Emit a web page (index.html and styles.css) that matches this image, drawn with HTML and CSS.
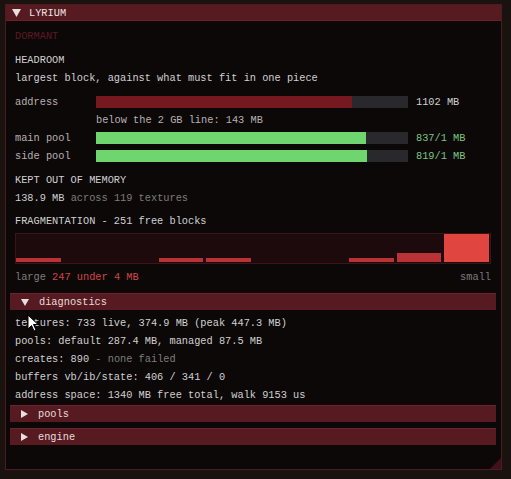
FILE: index.html
```html
<!DOCTYPE html>
<html lang="en">
  <head>
    <meta charset="UTF-8" />
    <title>Lyrium</title>
    <link rel="stylesheet" href="styles.css">
  </head>
  <body>
    <div class="window">
      <div class="title-bar">
        <svg class="tri" width="9" height="8" viewBox="0 0 9 8"><path d="M0 0H9L4.5 8Z" fill="#e8e0e0"/></svg>
        <span>LYRIUM</span>
      </div>

      <div class="content">
        <div class="row state">DORMANT</div>

        <div class="row section">HEADROOM</div>
        <div class="row">largest block, against what must fit in one piece</div>

        <div class="meters">
          <div class="meter">
            <span class="label">address</span>
            <div class="bar"><div class="fill red" style="width: 82%"></div></div>
            <span class="value">1102 MB</span>
          </div>
          <div class="meter">
            <span></span>
            <span class="label note">below the 2 GB line: 143 MB</span>
          </div>
          <div class="meter">
            <span class="label">main pool</span>
            <div class="bar"><div class="fill green" style="width: 86.5%"></div></div>
            <span class="value green-text">837/1 MB</span>
          </div>
          <div class="meter">
            <span class="label">side pool</span>
            <div class="bar"><div class="fill green" style="width: 87%"></div></div>
            <span class="value green-text">819/1 MB</span>
          </div>
        </div>

        <div class="row section">KEPT OUT OF MEMORY</div>
        <div class="row">138.9 MB <span class="dim">across 119 textures</span></div>

        <div class="row section frag-title">FRAGMENTATION - 251 free blocks</div>
        <div class="frag">
          <div class="bin" style="height: 4px"></div>
          <div class="bin empty"></div>
          <div class="bin empty"></div>
          <div class="bin" style="height: 4px"></div>
          <div class="bin" style="height: 4px"></div>
          <div class="bin empty"></div>
          <div class="bin empty"></div>
          <div class="bin" style="height: 4px"></div>
          <div class="bin" style="height: 9px"></div>
          <div class="bin hot" style="height: 28px"></div>
        </div>
        <div class="row frag-legend">
          <span><span class="dim">large</span> <span class="red-text">247 under 4 MB</span></span>
          <span class="dim">small</span>
        </div>

        <div class="header first">
          <svg class="tri" width="8" height="7" viewBox="0 0 8 7"><path d="M0 0H8L4 7Z" fill="#e8e0e0"/></svg>
          <span>diagnostics</span>
        </div>
        <div class="diag">
          <div class="row">textures: 733 live, 374.9 MB (peak 447.3 MB)</div>
          <div class="row">pools: default 287.4 MB, managed 87.5 MB</div>
          <div class="row">creates: 890 <span class="dim">- none failed</span></div>
          <div class="row">buffers vb/ib/state: 406 / 341 / 0</div>
          <div class="row">address space: 1340 MB free total, walk 9153 us</div>
        </div>

        <div class="header">
          <svg class="tri" width="7" height="8" viewBox="0 0 7 8"><path d="M0 0L7 4L0 8Z" fill="#e8e0e0"/></svg>
          <span>pools</span>
        </div>
        <div class="header next">
          <svg class="tri" width="7" height="8" viewBox="0 0 7 8"><path d="M0 0L7 4L0 8Z" fill="#e8e0e0"/></svg>
          <span>engine</span>
        </div>
      </div>

      <div class="grip"></div>
      <svg class="cursor" width="12" height="19" viewBox="0 0 12 19">
        <path d="M1 1V15L4.5 11.5L7 17L9 16L6.5 10.5H11Z" fill="#ffffff" stroke="#000000" stroke-width="1"/>
      </svg>
    </div>
  </body>
</html>
```

FILE: styles.css
```css
/* base */
* {
  margin: 0;
  padding: 0;
  box-sizing: border-box;
}

body {
  background: #19120f;
  font-family: "Liberation Mono", "DejaVu Sans Mono", monospace;
  font-size: 10.3px;
  color: #d0d0d0;
  height: 479px;
  overflow: hidden;
}

/* window frame */
.window {
  position: relative;
  margin: 4px 0 0 5px;
  width: 497px;
  height: 466px;
  background: #0c0808;
  border: 1px solid #4a1c20;
}

.title-bar {
  height: 16px;
  background: #561a20;
  border-bottom: 1px solid #6a2028;
  display: flex;
  align-items: center;
  gap: 8px;
  padding-left: 6px;
  color: #ece6e6;
}

.tri {
  display: block;
  flex: none;
}

.content {
  padding: 6px 10px 0 9px;
  display: flex;
  flex-direction: column;
}

.row {
  height: 18px;
  line-height: 18px;
  white-space: pre;
}

.state {
  color: #5c1a24;
}

.section {
  margin-top: 6px;
}

.dim {
  color: #7c7c7c;
}

.red-text {
  color: #d04545;
}

.green-text {
  color: #7bc67b;
}

/* meter rows */
.meters {
  margin-top: 6px;
}

.meter {
  display: grid;
  grid-template-columns: 81px 312px auto;
  align-items: center;
  height: 18px;
}

.meter .label {
  color: #b8b0b0;
  white-space: pre;
}

.meter .note {
  grid-column: 2 / 4;
}

.meter .bar {
  height: 12px;
  background: #29282c;
}

.meter .value {
  padding-left: 8px;
}

.fill {
  height: 100%;
}

.fill.red {
  background: #761820;
}

.fill.green {
  background: #6fd56f;
}

/* fragmentation histogram */
.frag-title {
  margin-top: 5px;
}

.frag {
  margin-top: 3px;
  height: 31px;
  background: #1d0a0c;
  border: 1px solid #3c1418;
  display: flex;
  align-items: flex-end;
  gap: 3px;
  padding: 0 1px 1px 0;
}

.bin {
  flex: 1;
  background: #b83236;
}

.bin.empty {
  height: 0;
}

.bin.hot {
  background: #e0453f;
}

.frag-legend {
  margin-top: 4px;
  display: flex;
  justify-content: space-between;
}

/* collapsing headers */
.header {
  margin: 0 -5px;
  height: 17px;
  background: #561a20;
  border-top: 1px solid #6c2430;
  display: flex;
  align-items: center;
  gap: 10px;
  padding-left: 11px;
  color: #e6dcdc;
}

.header.first {
  margin-top: 7px;
}

.header.next {
  margin-top: 6px;
}

.diag {
  margin: 4px 0 1px;
}

/* overlays */
.grip {
  position: absolute;
  right: 0;
  bottom: 0;
  width: 0;
  height: 0;
  border-left: 11px solid transparent;
  border-bottom: 11px solid #3e1218;
}

.cursor {
  position: absolute;
  left: 21px;
  top: 309px;
}
```
